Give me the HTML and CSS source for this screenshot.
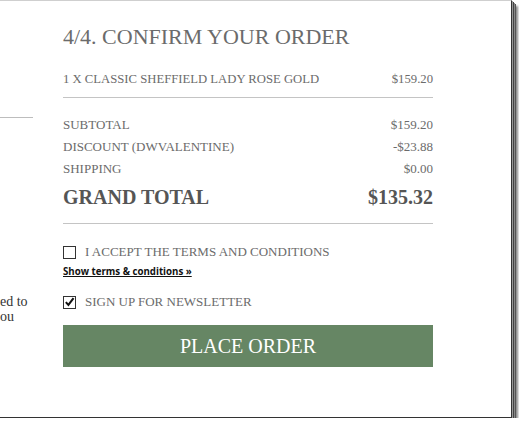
FILE: index.html
```html
<!DOCTYPE html>
<html lang="en">
<head>
  <meta charset="UTF-8" />
  <title>Confirm Your Order</title>
  <link rel="stylesheet" href="styles.css">
</head>
<body>

  <div class="window">
    <aside class="side">
      <hr class="side-rule">
      <p class="side-text">ed to<br>ou</p>
    </aside>

    <main class="confirm">
      <h2>4/4. Confirm your order</h2>

      <div class="row item">
        <span>1 x Classic Sheffield Lady Rose Gold</span>
        <span class="price">$159.20</span>
      </div>

      <div class="totals">
        <div class="row"><span>Subtotal</span><span class="price">$159.20</span></div>
        <div class="row"><span>Discount (DWVALENTINE)</span><span class="price">-$23.88</span></div>
        <div class="row"><span>Shipping</span><span class="price">$0.00</span></div>
        <div class="row grand"><span>Grand total</span><span class="price">$135.32</span></div>
      </div>

      <label class="check accept">
        <span class="box"></span>
        I accept the terms and conditions
      </label>
      <a class="terms" href="#">Show terms &amp; conditions &raquo;</a>

      <label class="check newsletter">
        <span class="box">
          <svg viewBox="0 0 12 12" width="12" height="12"><path d="M2 6.2 L4.8 9.2 L10.4 1.8" fill="none" stroke="#111" stroke-width="2.2"/></svg>
        </span>
        Sign up for newsletter
      </label>

      <button type="button" class="place">Place order</button>
    </main>
  </div>

</body>
</html>
```

FILE: styles.css
```css
* {
  box-sizing: border-box;
}

body {
  margin: 0;
  background: #fff;
  font-family: 'Liberation Serif', 'Times New Roman', serif;
  color: #6b6b6b;
}

.window {
  width: 512px;
  height: 418px;
  display: flex;
  gap: 30px;
  background: #fff;
  border-top: 1px solid #cfcfcf;
  border-right: 1px solid #333;
  border-bottom: 1px solid #333;
  box-shadow: 1px 1px 0 #999, 2px 2px 0 #444, 3px 3px 0 #888, 4px 4px 0 #555, 6px 6px 2px rgba(0, 0, 0, 0.45);
  overflow: hidden;
}

/* cut-off column on the left */
.side {
  width: 33px;
  flex-shrink: 0;
}

.side-rule {
  margin: 116px 0 0;
  border: 0;
  border-top: 1px solid #bdbdbd;
}

.side-text {
  margin: 176px 0 0;
  font-size: 14px;
  line-height: 15px;
  color: #333;
  white-space: nowrap;
}

.confirm {
  width: 370px;
  flex-shrink: 0;
}

h2 {
  margin: 22px 0 0;
  font-size: 22px;
  line-height: 28px;
  font-weight: 400;
  text-transform: uppercase;
  color: #6b6b6b;
}

.row {
  display: flex;
  justify-content: space-between;
  align-items: baseline;
  font-size: 13px;
  line-height: 22px;
  text-transform: uppercase;
}

.item {
  margin-top: 17px;
  padding-bottom: 7px;
  border-bottom: 1px solid #c4c4c4;
  font-size: 12.7px;
}

.totals {
  margin-top: 16px;
  padding-bottom: 11px;
  border-bottom: 1px solid #c4c4c4;
}

.row.grand {
  margin-top: 2px;
  font-size: 20px;
  line-height: 30px;
  font-weight: 700;
  color: #555;
}

.check {
  display: flex;
  align-items: center;
  gap: 9px;
  font-size: 13px;
  line-height: 20px;
  text-transform: uppercase;
  color: #6b6b6b;
}

.box {
  width: 13px;
  height: 13px;
  border: 1px solid #333;
  display: flex;
  align-items: center;
  justify-content: center;
}

.accept {
  margin-top: 18px;
}

.terms {
  display: block;
  margin-top: 2px;
  font-family: 'Open Sans', sans-serif;
  font-size: 9.7px;
  line-height: 16px;
  font-weight: 700;
  color: #111;
}

.newsletter {
  margin-top: 12px;
}

.place {
  display: block;
  width: 100%;
  height: 42px;
  margin-top: 13px;
  border: none;
  background: #668664;
  color: #fff;
  font-family: inherit;
  font-size: 20px;
  text-transform: uppercase;
  cursor: pointer;
}
```
